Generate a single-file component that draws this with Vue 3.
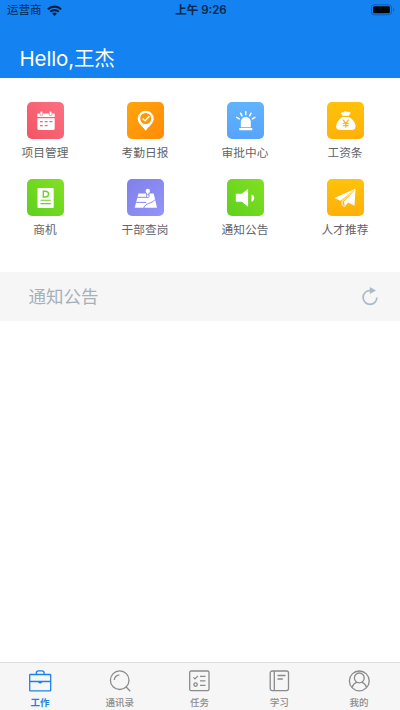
<script setup>
const apps = [
  { icon: 'calendar', label: '项目管理', tone: 'red' },
  { icon: 'pin', label: '考勤日报', tone: 'orange' },
  { icon: 'siren', label: '审批中心', tone: 'blue' },
  { icon: 'bag', label: '工资条', tone: 'yellow' },
  { icon: 'doc', label: '商机', tone: 'green' },
  { icon: 'map', label: '干部查岗', tone: 'purple' },
  { icon: 'speaker', label: '通知公告', tone: 'green' },
  { icon: 'plane', label: '人才推荐', tone: 'yellow' },
]
const tabs = [
  { icon: 'work', label: '工作', active: true },
  { icon: 'contacts', label: '通讯录' },
  { icon: 'tasks', label: '任务' },
  { icon: 'study', label: '学习' },
  { icon: 'me', label: '我的' },
]
</script>

<template>
  <div class="screen">
    <header class="header">
      <div class="status">
        <div class="carrier">
          <span>运营商</span>
          <svg class="wifi" viewBox="0 0 15 11">
            <g fill="none" stroke="currentColor" stroke-width="2.1">
              <path d="M.9 4.300a9.400 9.400 0 0 1 13.200 0" />
              <path d="M3.300 6.800a6 6 0 0 1 8.400 0" />
            </g>
            <path d="M7.500 11 5.200 8.700a3.300 3.300 0 0 1 4.600 0z" fill="currentColor" />
          </svg>
        </div>
        <div class="time">上午 9:26</div>
        <div class="power">
          <svg class="battery" viewBox="0 0 24 12">
            <rect x=".5" y=".8" width="20" height="10" rx="2.800" fill="none" stroke="#0f5cb0" />
            <rect x="2" y="2.300" width="17" height="7" rx="1.500" fill="#00050c" />
            <path d="M22 4.200v3.200q1.300-.4 1.300-1.600T22 4.200z" fill="#0f5cb0" />
          </svg>
        </div>
      </div>
      <h1 class="hello">Hello,王杰</h1>
    </header>

    <main class="main">
      <section class="grid">
        <div v-for="app in apps" :key="app.label" class="app">
          <div class="tile" :class="app.tone">
            <svg viewBox="0 0 37 37">
              <template v-if="app.icon === 'calendar'">
                <path d="M10.400 11.500h17.300v3.500H10.400zM10.400 16.200h17.300v10.300q0 1.500-1.500 1.500H11.900q-1.500 0-1.500-1.500z" fill="#fff" />
                <g fill="#fff" stroke="#f76375" stroke-width=".7">
                  <rect x="13" y="9.300" width="2.900" height="4.300" rx="1.400" />
                  <rect x="22.100" y="9.300" width="2.900" height="4.300" rx="1.400" />
                </g>
                <path d="M12.900 19.600h2.900m1.900 0h2.900m1.900 0h2.900M12.900 23.700h2.900m1.900 0h2.900" stroke="#f76375" stroke-width="1.300" />
              </template>
              <template v-else-if="app.icon === 'pin'">
                <path d="M18.700 28.700c-2-3.700-8-7-8-12a8 8 0 0 1 16 0c0 5-6 8.300-8 12z" fill="#fff" />
                <circle cx="18.700" cy="16.500" r="5.500" fill="#ff9808" />
                <path d="m15.600 16.500 2.500 2.200 4.200-4.500" fill="none" stroke="#fff" stroke-width="1.500" />
              </template>
              <template v-else-if="app.icon === 'siren'">
                <path d="M13.800 25.200v-5.200a5 5 0 0 1 10 0v5.200zM12.300 26h13v2.300h-13z" fill="#fff" />
                <path d="M18.800 9.800v3M13.500 11.200l1.500 2.600M24.100 11.200l-1.500 2.600M9.700 15.400l2.600 1.500M27.900 15.400l-2.600 1.500" stroke="#fff" stroke-width="1.500" stroke-linecap="round" />
              </template>
              <template v-else-if="app.icon === 'bag'">
                <path d="m15.500 13.800-1.800-2.700q1.300-1.400 2.600-.7 2-1.900 3.700-.4 1.800-1 3.700.7l-2 3.100zM15.200 15h7c3.700 2.500 6.400 5.600 6.400 9.300 0 2.800-1.700 3.800-4.200 3.800H13.300c-2.600 0-4.200-1-4.200-3.800 0-3.700 2.600-6.800 6.100-9.300z" fill="#fff" />
                <path d="m15.900 17.700 2.900 3.600 2.900-3.600M18.800 21.300v4.500M15.900 21.400h5.800M15.900 23.600h5.800" fill="none" stroke="#ffb90a" stroke-width="1.200" />
              </template>
              <template v-else-if="app.icon === 'doc'">
                <rect x="10.500" y="9" width="16.200" height="20" rx=".7" fill="#fff" />
                <path d="M16.300 12.200h2q3.300 0 3.300 2.900t-3.300 2.900h-2z" fill="none" stroke="#6bd420" stroke-width="1.400" />
                <path d="M13.500 21.300h10.300M13.500 24.600h10.300" stroke="#6bd420" stroke-width="1.100" />
              </template>
              <template v-else-if="app.icon === 'map'">
                <path d="M11.500 14.400h15.200l3.300 14.300H7.700z" fill="#fff" />
                <path d="M10 18.300h11M9.300 23.400h10M16.800 28.900c1.500-5.200 8-3.900 11-8.200" fill="none" stroke="#8788f0" stroke-width="1" />
                <path d="M20.800 14v3.500" stroke="#8788f0" stroke-width="3.200" />
                <path d="M20.800 12v5" stroke="#fff" stroke-width="1.200" />
                <circle cx="20.800" cy="11.900" r="2.200" fill="#fff" />
                <circle cx="20.800" cy="17.200" r="1.400" fill="#fff" stroke="#8788f0" stroke-width=".8" />
              </template>
              <template v-else-if="app.icon === 'speaker'">
                <path d="M9.500 14.700h5.300l6.300-5v18l-6.300-5H9.500q-.7 0-.7-.7v-6.600q0-.7.7-.7zM24.500 15.400a3.800 3.800 0 0 1 0 7.300z" fill="#fff" />
              </template>
              <template v-else>
                <path d="M7.300 18.900 28.200 9.800l-14.500 12zM28.500 10l-1 16.700-6.300-3.300-3.600 4.300-.8-5.300z" fill="#fff" />
                <path d="M28.200 10 15 22.500l.2 3.300 2.400 1.900" fill="none" stroke="#fff" stroke-width="1" />
                <path d="M27.300 10.900 16.500 22.700l.7 4.300" fill="none" stroke="#ffb60a" stroke-width=".7" />
              </template>
            </svg>
          </div>
          <span class="app-label">{{ app.label }}</span>
        </div>
      </section>

      <section class="notice">
        <h2>通知公告</h2>
        <svg class="refresh" viewBox="0 0 18 20">
          <path d="M9 4.500a6.900 6.900 0 1 0 6.900 6.900" fill="none" stroke="#abb9c9" stroke-width="1.700" />
          <path d="M8.800 1 15 4.500 8.800 8z" fill="#abb9c9" />
        </svg>
      </section>
    </main>

    <nav class="tabs">
      <div v-for="tab in tabs" :key="tab.icon" class="tab" :class="{ active: tab.active }">
        <svg viewBox="0 0 24 24" fill="none" stroke="currentColor" stroke-width="1.300">
          <template v-if="tab.icon === 'work'">
            <rect x="1.700" y="5.500" width="21" height="16.300" rx=".6" />
            <path d="M8.300 5.300V4q0-2.200 2.200-2.200h3.400q2.200 0 2.200 2.200v1.300M1.700 12.500h21M10.500 12.800q1.700 2 3.400 0" />
          </template>
          <template v-else-if="tab.icon === 'contacts'">
            <circle cx="11.700" cy="11.200" r="9.300" />
            <path d="m18.200 18 4 4.200M6.300 11q.4-4.300 5-5.100" />
          </template>
          <template v-else-if="tab.icon === 'tasks'">
            <rect x="2.700" y="2" width="19.300" height="19.600" rx="1.300" />
            <path d="m6.400 8.400 1.600 1.500 2.900-3M13 7.300h5.500M13 11.800h5.500M13 16.300h5.500" />
            <circle cx="8.600" cy="15.600" r="1.700" />
          </template>
          <template v-else-if="tab.icon === 'study'">
            <rect x="3.200" y="2" width="18.300" height="19.600" rx="2" />
            <path d="M7.300 2v19.600M10.500 6.500h8M10.500 10h5.300" />
          </template>
          <template v-else>
            <circle cx="12.300" cy="11.900" r="9.900" />
            <circle cx="12.300" cy="8.900" r="4.900" />
            <path d="M5 18.600q1.300-4.100 4.900-5.400M19.600 18.600q-1.300-4.100-4.900-5.400" />
          </template>
        </svg>
        <span>{{ tab.label }}</span>
      </div>
    </nav>
  </div>
</template>

<style>
body {
  margin: 0;
}
</style>

<style scoped>
.screen {
  display: flex;
  flex-direction: column;
  width: 400px;
  height: 710px;
  overflow: hidden;
  background: #fff;
  font-family: Inter, "Noto Sans CJK SC", sans-serif;
}
.header {
  flex: none;
  height: 78px;
  background: #1482f0;
}
.status {
  display: grid;
  grid-template-columns: 1fr auto 1fr;
  align-items: center;
  height: 20px;
  padding: 0 5px 0 7px;
  color: #06284f;
  font-size: 11.500px;
  line-height: 20px;
}
.carrier {
  display: flex;
  align-items: center;
  gap: 5px;
}
.wifi {
  width: 15px;
  height: 11px;
  color: #051d3b;
}
.time {
  font-weight: 600;
  letter-spacing: 0;
}
.power {
  display: flex;
  justify-content: flex-end;
}
.battery {
  width: 24px;
  height: 12px;
}
.hello {
  margin: 24px 0 0 19.500px;
  color: #fff;
  font-size: 20.500px;
  font-weight: 400;
  letter-spacing: -0.150px;
  line-height: 30px;
}
.main {
  flex: 1;
}
.grid {
  display: grid;
  grid-template-columns: repeat(4, 100px);
  grid-auto-rows: 77px;
  height: 170px;
  padding-top: 24px;
}
.app {
  display: flex;
  flex-direction: column;
  align-items: center;
  width: 90px;
}
.tile {
  width: 37px;
  height: 37px;
  margin-left: 1.400px;
  border-radius: 5px;
}
.tile svg {
  display: block;
}
.red {
  background: linear-gradient(45deg, #f15564, #fd7084);
}
.orange {
  background: linear-gradient(135deg, #ffa60b, #ff8a08);
}
.blue {
  background: linear-gradient(#62b3fd, #55a4fa);
}
.yellow {
  background: linear-gradient(#ffc20a, #ffb009);
}
.green {
  background: linear-gradient(45deg, #5fd01f, #82e022);
}
.purple {
  background: linear-gradient(135deg, #7f80ea, #9495f8);
}
.app-label {
  margin-top: 5px;
  color: #5f646a;
  font-size: 11.700px;
  line-height: 18px;
}
.notice {
  display: flex;
  align-items: center;
  justify-content: space-between;
  height: 49px;
  padding: 0 21px 0 28.500px;
  background: #f6f6f6;
}
.notice h2 {
  margin: 0;
  color: #a6b0ba;
  font-size: 17.500px;
  font-weight: 400;
  line-height: 26px;
}
.refresh {
  width: 18px;
  height: 20px;
  margin-bottom: 2px;
}
.tabs {
  display: grid;
  grid-template-columns: repeat(5, 1fr);
  box-sizing: border-box;
  height: 48px;
  padding: 6px 1px 0 0;
  border-top: 1px solid #dedede;
  background: #f6f6f6;
}
.tab {
  display: flex;
  flex-direction: column;
  align-items: center;
  color: #8b8b8b;
  font-size: 9.500px;
  font-weight: 500;
  line-height: 14px;
}
.tab svg {
  width: 24px;
  height: 24px;
  margin-bottom: 3px;
}
.tab.active {
  color: #1e83e8;
  font-weight: 700;
}
</style>
